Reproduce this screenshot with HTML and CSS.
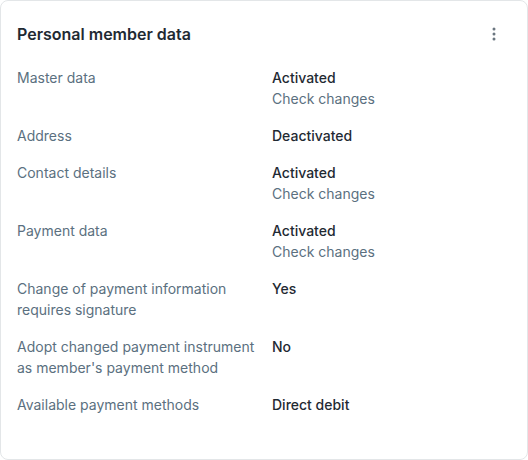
FILE: index.html
```html
<!DOCTYPE html>
<html lang="en">
<head>
<meta charset="utf-8">
<title>Personal member data</title>
<link rel="stylesheet" href="styles.css">
</head>
<body>
<section class="card">
  <header class="card-header">
    <h2 class="card-title">Personal member data</h2>
    <button class="menu-btn" aria-label="More options">
      <svg width="4" height="14" viewBox="0 0 4 14" aria-hidden="true">
        <circle cx="2" cy="2" r="1.5"/>
        <circle cx="2" cy="7" r="1.5"/>
        <circle cx="2" cy="12" r="1.5"/>
      </svg>
    </button>
  </header>
  <dl class="data-list">
    <dt class="label">Master data</dt>
    <dd class="value"><span class="strong">Activated</span><a class="link">Check changes</a></dd>

    <dt class="label">Address</dt>
    <dd class="value"><span class="strong">Deactivated</span></dd>

    <dt class="label">Contact details</dt>
    <dd class="value"><span class="strong">Activated</span><a class="link">Check changes</a></dd>

    <dt class="label">Payment data</dt>
    <dd class="value"><span class="strong">Activated</span><a class="link">Check changes</a></dd>

    <dt class="label">Change of payment information requires signature</dt>
    <dd class="value"><span class="strong">Yes</span></dd>

    <dt class="label">Adopt changed payment instrument as member's payment method</dt>
    <dd class="value"><span class="strong">No</span></dd>

    <dt class="label">Available payment methods</dt>
    <dd class="value"><span class="strong">Direct debit</span></dd>
  </dl>
</section>
</body>
</html>
```
FILE: styles.css
```css
* { box-sizing: border-box; }
html, body { margin: 0; padding: 0; background: #ffffff; }
body {
  font-family: Inter, "Noto Sans", "Liberation Sans", sans-serif;
  width: 528px;
  height: 460px;
}
.card {
  width: 528px;
  height: 460px;
  border: 1px solid #e3e6e8;
  border-radius: 8px;
  padding: 21px 16px 24px;
  background: #fff;
}
.card-header {
  display: flex;
  align-items: center;
  justify-content: space-between;
  height: 24px;
}
.card-title {
  margin: 0;
  font-size: 16px;
  line-height: 24px;
  font-weight: 600;
  color: #1f2a33;
}
.menu-btn {
  border: 0;
  background: none;
  padding: 0;
  margin-right: 15px;
  width: 4px;
  height: 14px;
  display: flex;
  cursor: pointer;
}
.menu-btn svg { fill: #6b7680; }
.data-list {
  margin: 21px 0 0;
  display: grid;
  grid-template-columns: 1fr 1fr;
  column-gap: 16px;
  row-gap: 16px;
  font-size: 14px;
  line-height: 21px;
}
.label {
  margin: 0;
  color: #5b7080;
}
.value {
  margin: 0;
  display: flex;
  flex-direction: column;
}
.strong {
  color: #1f2a33;
  font-weight: 450;
}
.link {
  color: #5b7080;
  text-decoration: none;
}
```
